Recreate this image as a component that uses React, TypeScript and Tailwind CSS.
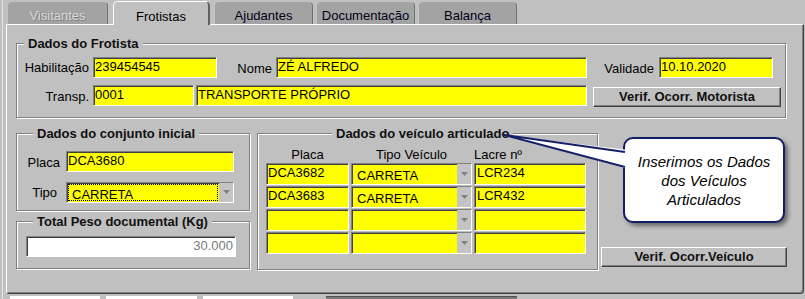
import React from 'react';

function Field({ className = '', text = '' }: { className?: string; text?: string }) {
  return (
    <div
      className={`h-[21px] shrink-0 border border-t-[#808080] border-l-[#808080] border-r-white border-b-white shadow-[inset_1px_1px_0_#404040] pl-[1px] leading-[18px] whitespace-nowrap overflow-hidden ${className}`}
    >
      {text}
    </div>
  );
}

function Arrow() {
  return (
    <div className="w-[14px] shrink-0 bg-[#c4c4c4] flex items-center justify-center">
      <svg width="7" height="4" viewBox="0 0 7 4">
        <polygon points="0,0 7,0 3.5,4" fill="#808080" />
      </svg>
    </div>
  );
}

function Select({ className = '', text = '', focused = false }: { className?: string; text?: string; focused?: boolean }) {
  return (
    <div
      className={`flex shrink-0 bg-[#ffff00] border border-t-[#808080] border-l-[#808080] border-r-white border-b-white shadow-[inset_1px_1px_0_#404040] ${className}`}
    >
      <div className="flex-1 p-[1px] min-w-0">
        <div
          className={`h-full pl-[3px] pt-[2px] leading-[16px] whitespace-nowrap ${
            focused ? 'border border-dotted border-black' : 'border border-transparent'
          }`}
        >
          {text}
        </div>
      </div>
      <Arrow />
    </div>
  );
}

function Button({ className = '', label }: { className?: string; label: string }) {
  return (
    <div
      className={`h-[20px] shrink-0 bg-[#c0c0c0] border border-t-white border-l-white border-r-[#404040] border-b-[#404040] shadow-[inset_-1px_-1px_0_#808080] flex items-center justify-center font-bold text-[13px] text-[#101010] ${className}`}
    >
      {label}
    </div>
  );
}

function Group({
  title,
  legendClass = '',
  className = '',
  children,
}: {
  title: string;
  legendClass?: string;
  className?: string;
  children?: React.ReactNode;
}) {
  return (
    <fieldset
      className={`shrink-0 min-w-0 border border-[#808080] shadow-[inset_1px_1px_0_#fff,1px_1px_0_#fff] ${className}`}
    >
      <legend className={`px-[4px] bg-[#c0c0c0] font-bold text-[13px] leading-[15px] text-[#101010] ${legendClass}`}>
        {title}
      </legend>
      {children}
    </fieldset>
  );
}

function Tab({ label, active = false, disabled = false, className = '' }: { label: string; active?: boolean; disabled?: boolean; className?: string }) {
  if (active) {
    return (
      <div
        className={`relative z-10 -mb-px h-[24px] bg-[#c0c0c0] rounded-t-[5px] border-t border-l border-white border-r-2 border-r-[#606060] flex justify-center pt-[5px] text-black ${className}`}
      >
        {label}
      </div>
    );
  }
  return (
    <div
      className={`h-[23px] bg-[#a3a3a3] rounded-t-[5px] border-t border-l border-[#c4c4c4] border-r border-r-[#707070] flex justify-center pt-[4px] ${
        disabled ? 'text-[#d8d8d8] [text-shadow:1px_1px_0_#808080]' : 'text-[#000018]'
      } ${className}`}
    >
      {label}
    </div>
  );
}

export default function App() {
  const rows = [
    ['DCA3682', 'CARRETA', 'LCR234'],
    ['DCA3683', 'CARRETA', 'LCR432'],
    ['', '', ''],
    ['', '', ''],
  ];

  return (
    <div className="relative w-[805px] h-[299px] overflow-hidden bg-[#c0c0c0] flex font-['Liberation_Sans',Arial,sans-serif] text-[13px] text-black">
      <div className="w-[2px] shrink-0" />
      <div className="w-px shrink-0 bg-[#e4e4e4]" />
      <div className="flex-1 flex flex-col">
        {/* tabs */}
        <div className="h-[24px] flex items-end pl-[4px]">
          <Tab label="Visitantes" disabled className="w-[101px]" />
          <Tab label="Frotistas" active className="ml-[5px] w-[97px]" />
          <Tab label="Ajudantes" className="ml-[4px] w-[99px]" />
          <Tab label="Documentação" className="ml-[3px] w-[99px]" />
          <Tab label="Balança" className="ml-[3px] w-[99px]" />
        </div>

        {/* panel */}
        <div className="ml-[3px] w-[798px] h-[271px] border-l border-t border-white border-r border-b border-r-[#404040] border-b-[#404040] shadow-[inset_-1px_-1px_0_#808080] rounded-bl-[3px] rounded-br-[4px]">
          <Group title="Dados do Frotista" legendClass="ml-[7px]" className="mt-[11px] ml-[9px] w-[770px] h-[82px] pt-[6px]">
            <div className="flex items-center h-[21px]">
              <div className="w-[76px] text-right pr-[4px]">Habilitação</div>
              <Field className="w-[124px] bg-[#ffff00]" text="239454545" />
              <div className="w-[59px] text-right pr-[4px] pt-[3px]">Nome</div>
              <Field className="w-[311px] bg-[#ffff00]" text="ZÉ ALFREDO" />
              <div className="w-[72px] text-right pr-[5px] pt-[2px]">Validade</div>
              <Field className="w-[114px] bg-[#ffff00]" text="10.10.2020" />
            </div>
            <div className="flex items-start mt-[7px]">
              <div className="w-[76px] h-[21px] flex items-center justify-end pr-[4px] pt-[3px]">Transp.</div>
              <Field className="w-[101px] bg-[#ffff00]" text="0001" />
              <Field className="ml-[2px] w-[391px] bg-[#ffff00]" text="TRANSPORTE PRÓPRIO" />
              <Button className="ml-[6px] mt-[2px] w-[188px]" label="Verif. Ocorr. Motorista" />
            </div>
          </Group>

          <div className="flex mt-[8px] ml-[9px]">
            <div className="w-[234px] shrink-0 flex flex-col">
              <Group title="Dados do conjunto inicial" legendClass="ml-[16px]" className="w-[234px] h-[85px] pt-[10px]">
                <div className="flex items-center">
                  <div className="w-[49px] text-right pr-[6px] pt-[2px]">Placa</div>
                  <Field className="w-[168px] bg-[#ffff00]" text="DCA3680" />
                </div>
                <div className="flex items-center mt-[9px]">
                  <div className="w-[49px] text-right pr-[9px] pt-[2px]">Tipo</div>
                  <Select className="w-[168px] h-[21px]" text="CARRETA" focused />
                </div>
              </Group>
              <Group title="Total Peso documental (Kg)" legendClass="ml-[16px]" className="mt-[3px] w-[234px] h-[55px] pt-[7px]">
                <Field className="ml-[9px] w-[210px] bg-[#ffffff] text-right pr-[2px] text-[#7a7a7a]" text="30.000" />
              </Group>
            </div>

            <Group title="Dados do veículo articulado" legendClass="ml-[66px]" className="ml-[7px] w-[341px] h-[144px] pt-[6px] pl-[8px]">
              <div className="flex h-[16px] leading-[15px]">
                <div className="w-[83px] text-center">Placa</div>
                <div className="ml-[2px] w-[121px] text-center">Tipo Veículo</div>
                <div className="ml-[2px] w-[112px]">Lacre nº</div>
              </div>
              <div className="flex flex-col gap-[1px]">
                {rows.map((r, i) => (
                  <div key={i} className="flex gap-[2px]">
                    <Field className="w-[83px] h-[22px] bg-[#ffff00] leading-[17px]" text={r[0]} />
                    <Select className="w-[121px] h-[22px]" text={r[1]} />
                    <Field className="w-[112px] h-[22px] bg-[#ffff00] leading-[17px] pl-[2px]" text={r[2]} />
                  </div>
                ))}
              </div>
            </Group>

            <div className="ml-[3px] pt-[121px]">
              <Button className="w-[186px]" label="Verif. Ocorr.Veículo" />
            </div>
          </div>
        </div>

        {/* next window strip */}
        <div className="flex mt-[2px] h-[3px]">
          <div className="ml-[7px] w-[90px] bg-white" />
          <div className="ml-[6px] w-[91px] bg-white" />
          <div className="ml-[6px] w-[90px] bg-white" />
          <div className="ml-[33px] w-[191px] bg-[#7a7a7a] border-t border-[#505050]" />
        </div>
      </div>

      {/* callout */}
      <div className="absolute left-[623px] top-[137px] w-[162px] h-[86px] rounded-[10px] border-2 border-[#141e66] bg-white shadow-[3px_3px_4px_rgba(0,0,0,0.45)] flex items-center justify-center text-center italic text-[15px] leading-[19px] text-black">
        <div>
          Inserimos os Dados
          <br />
          dos Veículos
          <br />
          Articulados
        </div>
      </div>
      <svg className="absolute left-0 top-0 pointer-events-none" width="805" height="299">
        <polygon points="504,135 628,150 628,169" fill="#fff" />
        <polyline points="625,152 504,135 625,167" fill="none" stroke="#141e66" strokeWidth="2" strokeLinejoin="miter" />
      </svg>
    </div>
  );
}
